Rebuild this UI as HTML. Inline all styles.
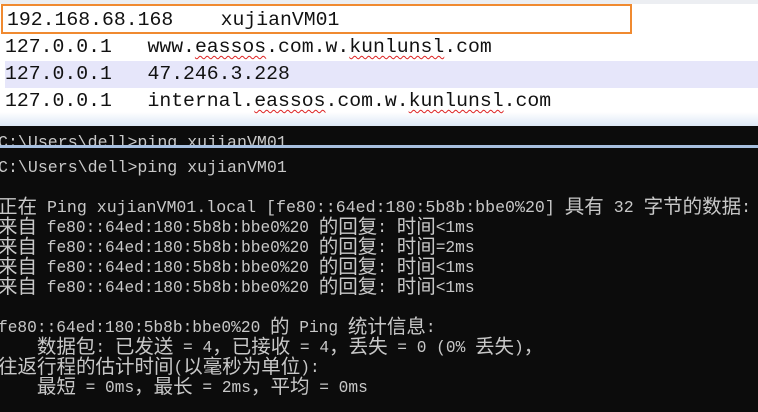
<!DOCTYPE html>
<html><head><meta charset="utf-8"><style>
body{margin:0;width:758px;height:412px;overflow:hidden;background:#fff;position:relative;font-family:"Liberation Mono","Noto Sans CJK SC",monospace}
.top{position:absolute;left:0;top:0;width:758px;height:126px;background:linear-gradient(#fff 0,#fff 112px,#dde8f6 126px)}
.r{position:absolute;left:5px;width:753px;height:27px;font-size:19.8px;line-height:27px;color:#111;white-space:pre}
.sq{text-decoration:underline wavy #d22;text-decoration-thickness:1px;text-underline-offset:3px}
.term{position:absolute;left:0;top:126px;width:758px;height:286px;background:#0c0c0c;overflow:hidden}
.t{position:absolute;left:-2px;font-size:16.2px;color:#c8c8c8;font-family:"Liberation Mono",monospace}
.t div{height:20px;line-height:20px;white-space:pre}
.c{font-size:19.5px;font-family:"Noto Sans CJK SC",sans-serif;line-height:0;vertical-align:-1px}
.w{font-size:16.6px}
</style></head><body>
<div class="top">
<div style="position:absolute;left:0;top:0;width:758px;height:4px;background:#eceef2"></div>
<div class="r" style="top:4px;left:1px;width:623px;border:2px solid #f08a30;height:26px;padding-left:4px;line-height:28px">192.168.68.168    xujianVM01</div>
<div class="r" style="top:34px">127.0.0.1   www.<span class="sq">eassos</span>.com.w.<span class="sq">kunlunsl</span>.com</div>
<div class="r" style="top:61px;background:#e6e6fa">127.0.0.1   47.246.3.228</div>
<div class="r" style="top:88px">127.0.0.1   internal.<span class="sq">eassos</span>.com.w.<span class="sq">kunlunsl</span>.com</div>
</div>
<div class="term">
<div class="t w" style="top:3px;height:16px;overflow:hidden"><div style="line-height:28px">C:\Users\dell>ping xujianVM01</div></div>
<div style="position:absolute;left:0;top:19px;width:758px;height:3px;background:#a8c0e0"></div>
<div class="t w" style="top:32px"><div>C:\Users\dell>ping xujianVM01</div></div>
<div class="t" style="top:72px"><div class="w"><span class="c">正在</span> Ping xujianVM01.local [fe80::64ed:180:5b8b:bbe0%20] <span class="c">具有</span> 32 <span class="c">字节的数据</span>:</div><div><span class="c">来自</span> fe80::64ed:180:5b8b:bbe0%20 <span class="c">的回复</span>: <span class="c">时间</span>&lt;1ms</div><div><span class="c">来自</span> fe80::64ed:180:5b8b:bbe0%20 <span class="c">的回复</span>: <span class="c">时间</span>=2ms</div><div><span class="c">来自</span> fe80::64ed:180:5b8b:bbe0%20 <span class="c">的回复</span>: <span class="c">时间</span>&lt;1ms</div><div><span class="c">来自</span> fe80::64ed:180:5b8b:bbe0%20 <span class="c">的回复</span>: <span class="c">时间</span>&lt;1ms</div><div></div><div>fe80::64ed:180:5b8b:bbe0%20 <span class="c">的</span> Ping <span class="c">统计信息</span>:</div><div>    <span class="c">数据包</span>: <span class="c">已发送</span> = 4<span class="c">，已接收</span> = 4<span class="c">，丢失</span> = 0 (0% <span class="c">丢失</span>)<span class="c">，</span></div><div><span class="c">往返行程的估计时间</span>(<span class="c">以毫秒为单位</span>):</div><div>    <span class="c">最短</span> = 0ms<span class="c">，最长</span> = 2ms<span class="c">，平均</span> = 0ms</div></div>
</div>
</body></html>
